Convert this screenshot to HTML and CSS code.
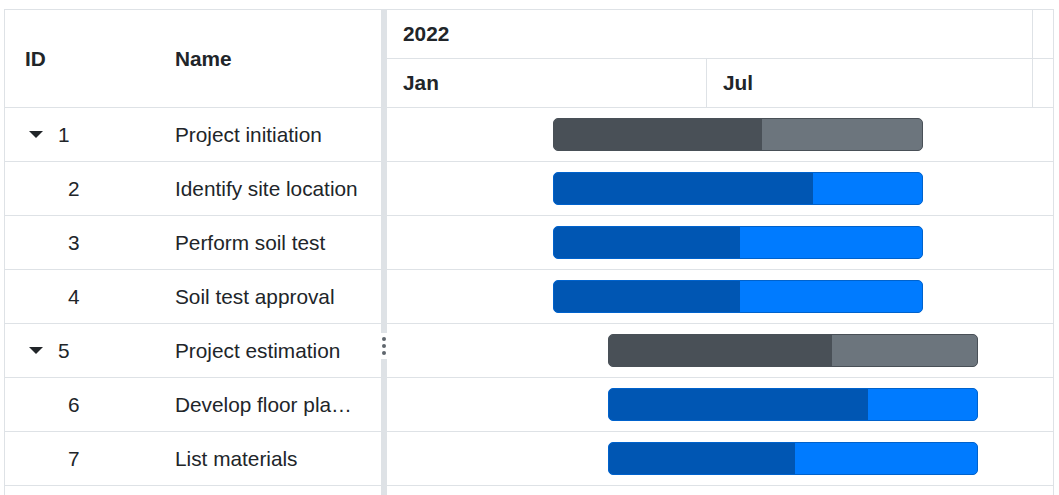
FILE: index.html
```html
<!DOCTYPE html>
<html lang="en">
<head>
<meta charset="utf-8">
<title>Gantt</title>
<link rel="stylesheet" href="styles.css">
</head>
<body>
<div class="gantt">
  <div class="grid-pane">
    <div class="grid-header">
      <div class="cell col-id">ID</div>
      <div class="cell col-name">Name</div>
    </div>
    <div class="grid-row">
      <div class="cell col-id"><span class="toggle"><span class="caret"></span></span>1</div>
      <div class="cell col-name">Project initiation</div>
    </div>
    <div class="grid-row">
      <div class="cell col-id child">2</div>
      <div class="cell col-name">Identify site location</div>
    </div>
    <div class="grid-row">
      <div class="cell col-id child">3</div>
      <div class="cell col-name">Perform soil test</div>
    </div>
    <div class="grid-row">
      <div class="cell col-id child">4</div>
      <div class="cell col-name">Soil test approval</div>
    </div>
    <div class="grid-row">
      <div class="cell col-id"><span class="toggle"><span class="caret"></span></span>5</div>
      <div class="cell col-name">Project estimation</div>
    </div>
    <div class="grid-row">
      <div class="cell col-id child">6</div>
      <div class="cell col-name">Develop floor plan for estimation</div>
    </div>
    <div class="grid-row">
      <div class="cell col-id child">7</div>
      <div class="cell col-name">List materials</div>
    </div>
  </div>

  <div class="splitter">
    <div class="splitter-handle">
      <span class="dot"></span><span class="dot"></span><span class="dot"></span>
    </div>
  </div>

  <div class="chart-pane">
    <div class="chart-header">
      <div class="hdr-row">
        <div class="hdr-cell year">2022</div>
        <div class="gutter"></div>
      </div>
      <div class="hdr-row">
        <div class="hdr-cell jan">Jan</div>
        <div class="hdr-cell jul">Jul</div>
        <div class="gutter"></div>
      </div>
    </div>
    <div class="chart-row"><div class="bar parent" style="margin-left:166px;width:370px"><div class="progress" style="width:56.5%"></div></div></div>
    <div class="chart-row"><div class="bar task" style="margin-left:166px;width:370px"><div class="progress" style="width:70.5%"></div></div></div>
    <div class="chart-row"><div class="bar task" style="margin-left:166px;width:370px"><div class="progress" style="width:50.5%"></div></div></div>
    <div class="chart-row"><div class="bar task" style="margin-left:166px;width:370px"><div class="progress" style="width:50.5%"></div></div></div>
    <div class="chart-row"><div class="bar parent" style="margin-left:221px;width:370px"><div class="progress" style="width:60.5%"></div></div></div>
    <div class="chart-row"><div class="bar task" style="margin-left:221px;width:370px"><div class="progress" style="width:70.5%"></div></div></div>
    <div class="chart-row"><div class="bar task" style="margin-left:221px;width:370px"><div class="progress" style="width:50.5%"></div></div></div>
  </div>
</div>
</body>
</html>
```

FILE: styles.css
```css
* {
  box-sizing: border-box;
}

html, body {
  margin: 0;
  padding: 0;
  background: #ffffff;
  overflow: hidden;
}

body {
  padding: 9px 5px 0 4px;
  font-family: "Liberation Sans", Arial, sans-serif;
  font-size: 20.8px;
  color: #212529;
}

.gantt {
  display: flex;
  width: 1050px;
  height: 700px;
  border: 1px solid #dee2e6;
}

/* left grid */
.grid-pane {
  width: 376px;
  flex: none;
  display: flex;
  flex-direction: column;
}

.grid-header {
  display: flex;
  height: 98px;
  border-bottom: 1px solid #dee2e6;
  font-weight: bold;
}

.grid-row {
  display: flex;
  height: 54px;
  border-bottom: 1px solid #dee2e6;
}

.cell {
  display: flex;
  align-items: center;
  padding: 0 20px;
  white-space: nowrap;
  overflow: hidden;
}

.col-id {
  width: 150px;
  flex: none;
}

.col-id.child {
  padding-left: 63px;
}

.col-name {
  width: 226px;
  flex: none;
  display: block;
  text-overflow: ellipsis;
  align-self: center;
}

.toggle {
  display: inline-flex;
  align-items: center;
  width: 33px;
  flex: none;
  padding-left: 4px;
}

.caret {
  width: 0;
  height: 0;
  border-left: 7px solid transparent;
  border-right: 7px solid transparent;
  border-top: 7px solid #212529;
}

/* splitter */
.splitter {
  width: 6px;
  flex: none;
  background: #dee2e6;
  position: relative;
}

.splitter-handle {
  position: absolute;
  left: 0;
  top: 323px;
  width: 6px;
  height: 26px;
  background: #ffffff;
  display: flex;
  flex-direction: column;
  align-items: center;
  justify-content: center;
  gap: 3px;
}

.dot {
  width: 4px;
  height: 4px;
  border-radius: 50%;
  background: #5f666d;
}

/* chart */
.chart-pane {
  flex: 1;
  display: flex;
  flex-direction: column;
  min-width: 0;
}

.chart-header {
  display: flex;
  flex-direction: column;
  font-weight: bold;
}

.hdr-row {
  display: flex;
  height: 49px;
  border-bottom: 1px solid #dee2e6;
}

.hdr-cell {
  display: flex;
  align-items: center;
  padding-left: 16px;
  border-right: 1px solid #dee2e6;
  white-space: nowrap;
}

.year {
  width: 646px;
}

.jan {
  width: 320px;
}

.jul {
  width: 326px;
}

.gutter {
  flex: 1;
}

.chart-row {
  display: flex;
  align-items: center;
  height: 54px;
  border-bottom: 1px solid #dee2e6;
}

.bar {
  height: 33px;
  border-radius: 5px;
  border: 1px solid;
  overflow: hidden;
  display: flex;
}

.bar.parent {
  background: #6c757d;
  border-color: #495057;
}

.bar.parent .progress {
  background: #495057;
}

.bar.task {
  background: #007bff;
  border-color: #0062cc;
}

.bar.task .progress {
  background: #0056b3;
}

.progress {
  height: 100%;
}
```
